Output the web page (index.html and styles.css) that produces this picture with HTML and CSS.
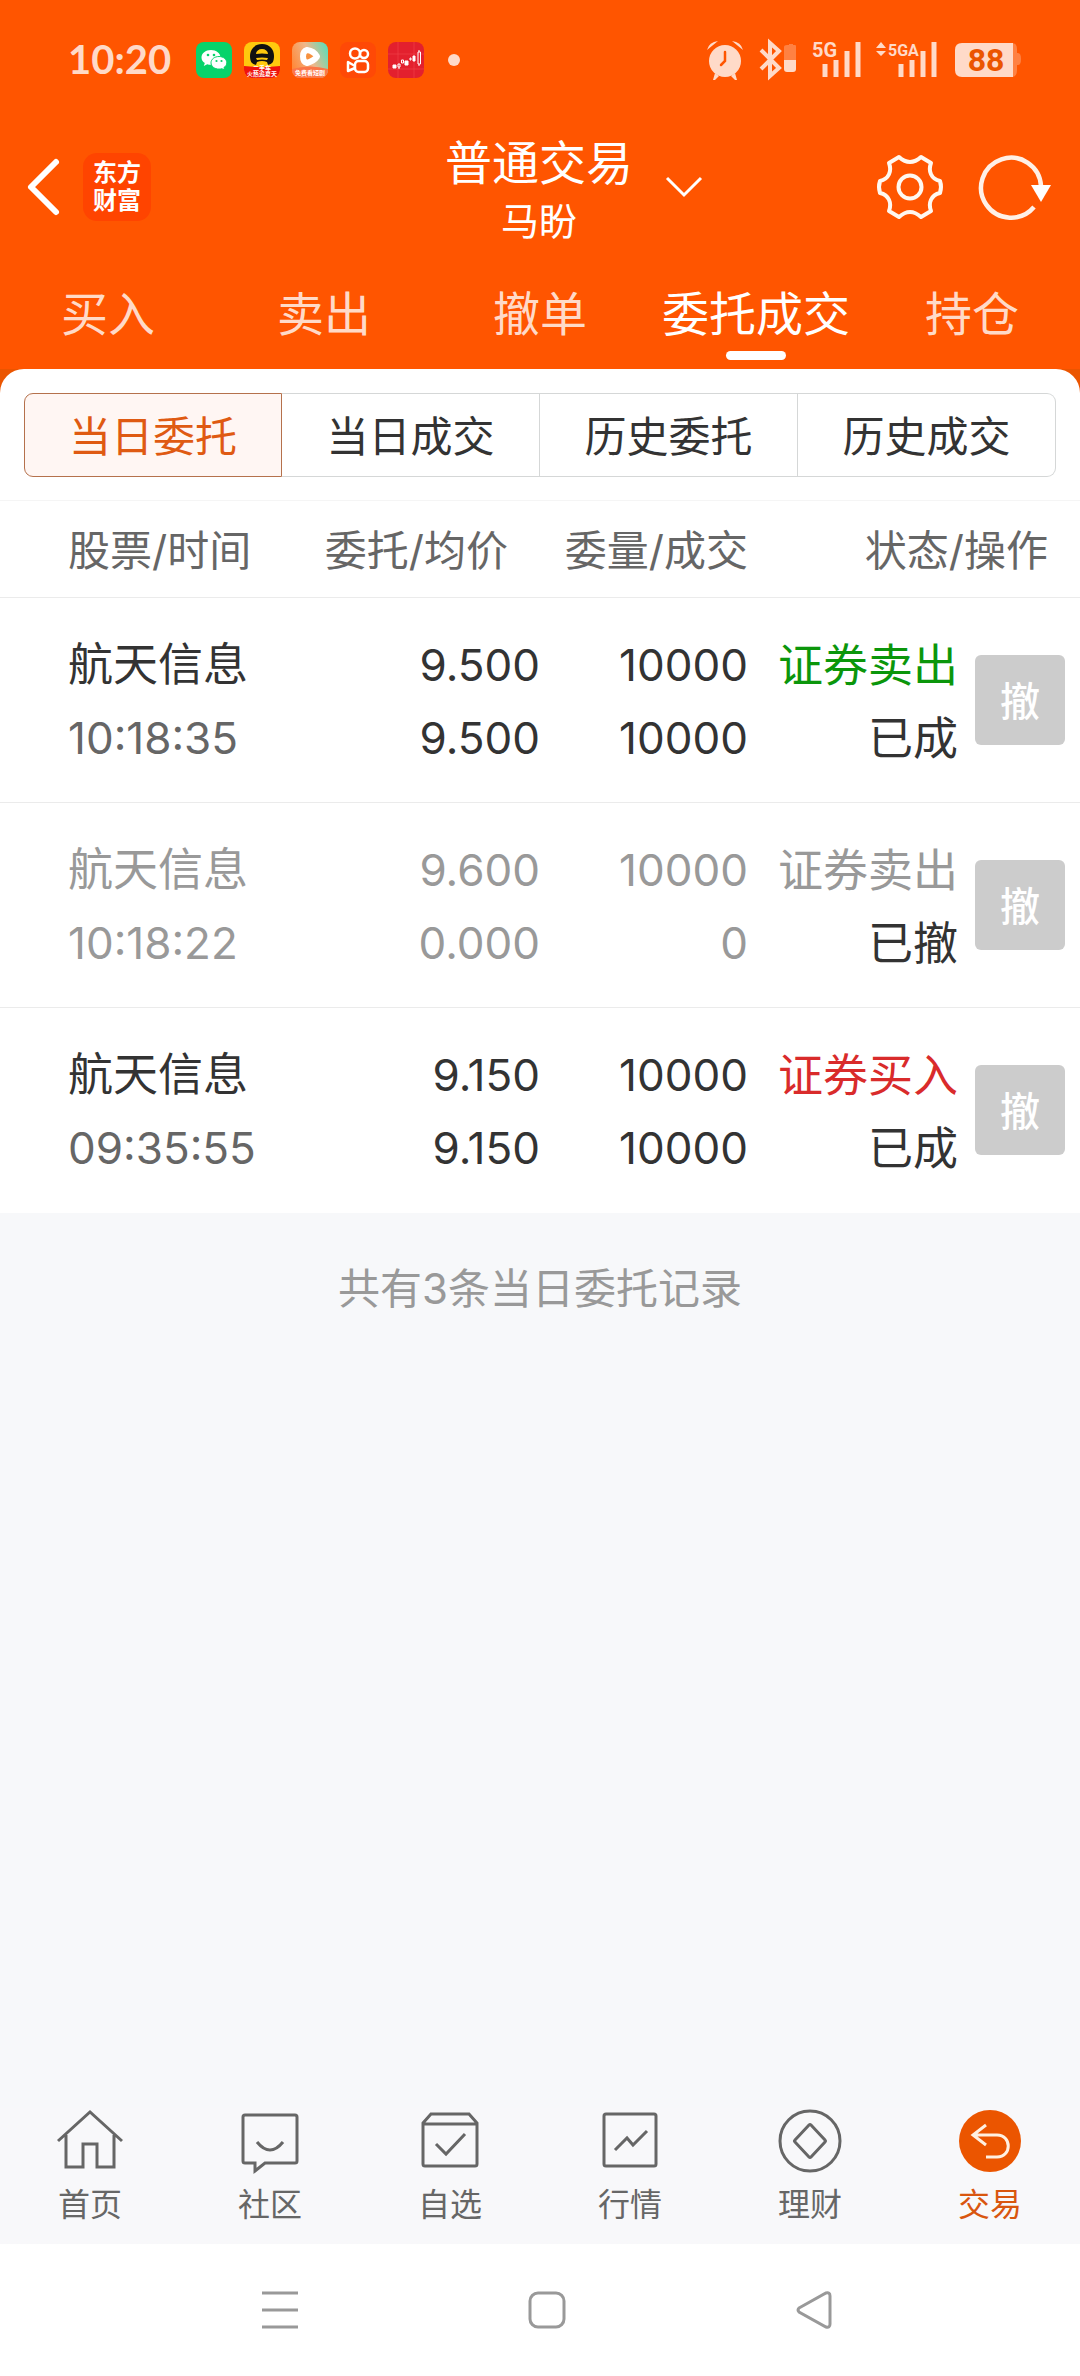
FILE: index.html
```html
<!DOCTYPE html>
<html lang="zh-CN">
<head>
    <meta charset="UTF-8">
    <meta name="viewport" content="width=device-width, initial-scale=1.0">
    <title>普通交易</title>
    <link rel="stylesheet" href="styles.css">
</head>
<body>
<header class="header">
    <!-- 状态栏 -->
    <div class="statusbar">
        <span class="clock">10:20</span>
        <div class="notices">
            <svg width="36" height="36" viewBox="0 0 36 36">
                <rect width="36" height="36" rx="8" fill="#07d36b"/>
                <path d="M15 8c-5.500 0-9.500 3.300-9.500 7.400 0 2.300 1.300 4.300 3.300 5.600l-1 3 3.400-1.700c1.200.4 2.500.5 3.800.5 5.300 0 9.500-3.300 9.500-7.400S20.300 8 15 8z" fill="#fff"/>
                <path d="M23 14.500c-4.500 0-8 2.800-8 6.300s3.500 6.300 8 6.300c1 0 2-.2 2.900-.4l2.800 1.400-.8-2.500c1.800-1.200 2.900-2.900 2.900-4.800 0-3.500-3.400-6.300-7.800-6.300z" fill="#fff" stroke="#07d36b"/>
                <g fill="#07d36b"><circle cx="12" cy="13" r="1.300"/><circle cx="18" cy="13" r="1.300"/><circle cx="20.500" cy="19" r="1.100"/><circle cx="25.500" cy="19" r="1.100"/></g>
            </svg>
            <svg width="36" height="36" viewBox="0 0 36 36">
                <rect width="36" height="36" rx="8" fill="#ffc90e"/>
                <path d="M0 24q18 2 36 0v4a8 8 0 0 1-8 8H8a8 8 0 0 1-8-8z" fill="#f0130d"/>
                <path d="M18 2C10 2 6 8 6 14s2 8 6 9l1-3q5-2 10 0l1 3c4-1 6-3 6-9S26 2 18 2z" fill="#111"/>
                <path d="M12 12a6 5 0 0 1 12 0q-6-1-12 0zM12 16q6-1 12 0l-1 2q-5-1-10 0z" fill="#ffc90e"/>
                <text x="18" y="28" class="tiny">二手车</text>
                <text x="18" y="34" class="tiny">火热追夏天</text>
            </svg>
            <svg width="36" height="36" viewBox="0 0 36 36">
                <defs><linearGradient id="play" x1="0" y1=".6" x2="1" y2=".2"><stop offset="0" stop-color="#ff8a3c"/><stop offset=".5" stop-color="#efb78a"/><stop offset="1" stop-color="#5fdcb8"/></linearGradient></defs>
                <rect width="36" height="36" rx="8" fill="url(#play)"/>
                <path d="M0 27q18-5 36 0v1a8 8 0 0 1-8 8H8a8 8 0 0 1-8-8z" fill="#fb7648"/>
                <path d="M15 8q-4 1-4 6.500T15 21q7-2 10-6.500Q22 9 15 8z" fill="#f7913f" stroke="#fff" stroke-width="6" stroke-linejoin="round"/>
                <text x="18" y="33" class="tiny">免费看短剧</text>
            </svg>
            <svg width="36" height="36" viewBox="0 0 36 36">
                <rect width="36" height="36" rx="8" fill="#ff4906"/>
                <g fill="none" stroke="#fff" stroke-width="2.500" stroke-linejoin="round"><circle cx="15" cy="11.500" r="5"/><circle cx="24" cy="12" r="4"/><rect x="15" y="19" width="13" height="11" rx="3.500"/><path d="M15 24l-7-4v9l7-3"/></g>
            </svg>
            <svg width="36" height="36" viewBox="0 0 36 36">
                <rect width="36" height="36" rx="8" fill="#e3202e"/>
                <path d="M10 0v36M26 0v36M0 12h36M0 27h36" stroke="#f04a50" stroke-width=".5"/>
                <g fill="#fff" stroke="#fff"><path d="M5 23h3v3H5zM17 19h3v4h-3zM25 14h2v5h-2z"/><path d="M10 22h2v3h-2zM13.500 18h2v3h-2zM22 16h1v2h-1zM30 10h2.500v12H30zM31 8v2M31 22v2M11 25v2" fill="none"/></g>
            </svg>
        </div>
        <i class="dot"></i>
        <div class="signals">
            <svg width="38" height="40" viewBox="0 0 38 40">
                <g fill="#ffdac8"><circle cx="19" cy="21" r="16"/><path d="M1 10q2-8 11-9zM37 10q-2-8-11-9zM9 33l4 3-4 4h-2zM29 33l-4 3 4 4h2z"/></g>
                <path d="M19 12v9l-4 4" fill="none" stroke="#ff5500" stroke-width="2.500" stroke-linecap="round"/>
            </svg>
            <svg width="40" height="40" viewBox="0 0 40 40">
                <path d="M3 10l18 18-9 8V3l9 8L3 29" fill="none" stroke="#ffdac8" stroke-width="4"/>
                <path d="M29 5h2V4h4v1h2q1 0 1 1v14H26V7q0-2 3-2z" fill="#ff8142"/>
                <path d="M26 20h12v9q0 3-3 3h-6q-3 0-3-3z" fill="#ffdac8"/>
            </svg>
            <svg width="50" height="40" viewBox="0 0 50 40">
                <text x="0" y="17" class="net">5G</text>
                <path d="M13 24v13M24 20v17M35 11v26M46 2v35" stroke="#ffdac8" stroke-width="5"/>
            </svg>
            <svg width="64" height="40" viewBox="0 0 64 40">
                <path d="M0 8l5-6 5 6zM0 11l5 5 5-5z" fill="#ffdac8"/>
                <text x="12" y="16" class="net narrow">5GA</text>
                <path d="M25 24v13M36 20v17M47 11v26M58 2v35" stroke="#ffdac8" stroke-width="5"/>
            </svg>
            <svg width="68" height="36" viewBox="0 0 68 36">
                <path d="M56 1h2q5 0 5 6v4h1q3 0 3 6t-3 6h-1v5q0 7-5 7h-2z" fill="#ff8142"/>
                <path d="M8 1h51v34H8q-7 0-7-7V8q0-7 7-7z" fill="#ffdac8"/>
                <text x="32" y="29" class="battery">88</text>
            </svg>
        </div>
    </div>

    <!-- 标题栏 -->
    <div class="titlebar">
        <div class="side">
            <button class="icon-btn" aria-label="返回">
                <svg width="34" height="60" viewBox="0 0 34 60"><path d="M30 5L5 30l25 25" fill="none" stroke="#fff" stroke-width="6" stroke-linecap="round" stroke-linejoin="round"/></svg>
            </button>
            <a class="logo" href="#">东方<br>财富</a>
        </div>
        <div class="title">
            <h1>普通交易</h1>
            <p>马盼</p>
        </div>
        <div class="side">
            <button class="icon-btn switch" aria-label="切换账户">
                <svg width="38" height="22" viewBox="0 0 38 22"><path d="M2 2l17 17L36 2" fill="none" stroke="#fff" stroke-width="3"/></svg>
            </button>
            <button class="icon-btn setting" aria-label="设置">
                <svg width="66" height="64" viewBox="0 0 66 64" fill="none" stroke="#fff8f0" stroke-width="4" stroke-linejoin="round"><path d="M22 2Q33 12 44 2L54 8C51 16 54 24 63 26Q65 32 63 38C54 40 51 48 54 56L44 62Q33 52 22 62L12 56C15 48 12 40 3 38Q1 32 3 26C12 24 15 16 12 8Z"/><circle cx="33" cy="32" r="11.500"/></svg>
            </button>
            <button class="icon-btn" aria-label="刷新">
                <svg width="74" height="66" viewBox="0 0 74 66"><path d="M56 53A30 30 0 1 1 63 32" fill="none" stroke="#fff0e6" stroke-width="4.500"/><path d="M53 31h20L63 48z" fill="#fff"/></svg>
            </button>
        </div>
    </div>

    <nav class="tabs">
        <a href="#">买入</a>
        <a href="#">卖出</a>
        <a href="#">撤单</a>
        <a href="#" class="active">委托成交</a>
        <a href="#">持仓</a>
    </nav>
</header>

<main>
    <div class="panel-wrap">
        <div class="panel">
            <div class="segments">
                <button class="active">当日委托</button>
                <button>当日成交</button>
                <button>历史委托</button>
                <button>历史成交</button>
            </div>
        </div>
    </div>

    <table class="orders">
        <colgroup>
            <col>
            <col class="col-price">
            <col class="col-amount">
            <col class="col-state">
            <col class="col-action">
        </colgroup>
        <thead>
        <tr>
            <th class="name">股票/时间</th>
            <th class="price">委托/均价</th>
            <th>委量/成交</th>
            <th class="state" colspan="2">状态/操作</th>
        </tr>
        </thead>
        <tbody>
        <tr>
            <td class="name">航天信息<br><span class="time">10:18:35</span></td>
            <td class="num">9.500<br>9.500</td>
            <td class="num">10000<br>10000</td>
            <td><span class="sell">证券卖出</span><br>已成</td>
            <td class="action"><button class="cancel">撤</button></td>
        </tr>
        <tr class="revoked">
            <td class="name">航天信息<br><span class="time">10:18:22</span></td>
            <td class="num">9.600<br>0.000</td>
            <td class="num">10000<br>0</td>
            <td>证券卖出<br><span class="done">已撤</span></td>
            <td class="action"><button class="cancel">撤</button></td>
        </tr>
        <tr>
            <td class="name">航天信息<br><span class="time">09:35:55</span></td>
            <td class="num">9.150<br>9.150</td>
            <td class="num">10000<br>10000</td>
            <td><span class="buy">证券买入</span><br>已成</td>
            <td class="action"><button class="cancel">撤</button></td>
        </tr>
        </tbody>
    </table>
    <p class="summary">共有3条当日委托记录</p>
</main>

<!-- 底部导航 -->
<nav class="bottom-nav">
    <a href="#">
        <svg viewBox="0 0 66 66"><path d="M1 33L33 4l32 29M9 27v32h17V36h14v23h17V27"/></svg>
        <span>首页</span>
    </a>
    <a href="#">
        <svg viewBox="0 0 66 66"><path d="M8 7h50q2 0 2 2v44q0 2-2 2H28l-10 8v-8H8q-2 0-2-2V9q0-2 2-2zM20 34q13 16 26 0"/></svg>
        <span>社区</span>
    </a>
    <a href="#">
        <svg viewBox="0 0 66 66"><path d="M6 15l8-9h38l8 9v41q0 2-2 2H8q-2 0-2-2zM6 16h54M19 36l10 10 19-20"/></svg>
        <span>自选</span>
    </a>
    <a href="#">
        <svg viewBox="0 0 66 66"><path d="M9 6h48q2 0 2 2v48q0 2-2 2H9q-2 0-2-2V8q0-2 2-2zM18 42l12-12 6 7 14-14"/></svg>
        <span>行情</span>
    </a>
    <a href="#">
        <svg viewBox="0 0 66 66"><circle cx="33" cy="33" r="30"/><path d="M32 17q1-1 2 0l14 15q1 1 0 2L34 49q-1 1-2 0L18 34q-1-1 0-2z"/></svg>
        <span>理财</span>
    </a>
    <a href="#" class="active">
        <svg viewBox="0 0 66 66"><circle cx="33" cy="33" r="31" fill="#eb5500" stroke="none"/><path d="M29 17L16 27l13 10M16 27h24c15 0 15 22 0 22H29" stroke="#fff0e0"/></svg>
        <span>交易</span>
    </a>
</nav>

<div class="system-bar">
    <button class="icon-btn" aria-label="最近任务"><svg width="36" height="38" viewBox="0 0 36 38"><path d="M0 2h36M0 19h36M0 36h36"/></svg></button>
    <button class="icon-btn" aria-label="主屏幕"><svg width="38" height="38" viewBox="0 0 38 38"><rect x="2" y="2" width="34" height="34" rx="8"/></svg></button>
    <button class="icon-btn" aria-label="后退"><svg width="36" height="38" viewBox="0 0 36 38"><path d="M3 17L30 2q4-1 4 3v28q0 4-4 3L3 21q-2-2 0-4z"/></svg></button>
</div>
</body>
</html>
```
FILE: styles.css
```css
:root {
    --brand: #ff5500;
    --brand-deep: #eb5500;
    --status-color: #ffdac8;
    --text-color: #333;
    --text-gray: #666;
    --text-light: #999;
    --page-bg: #f7f8fa;
}
* {
    box-sizing: border-box;
}
body {
    margin: 0;
    min-height: 100vh;
    display: flex;
    flex-direction: column;
    font-family: Inter, "Noto Sans CJK SC", sans-serif;
    color: var(--text-color);
    background-color: var(--page-bg);
}
h1, p {
    margin: 0;
    font-weight: 400;
}
a {
    color: inherit;
    text-decoration: none;
}
button {
    font-family: inherit;
    color: inherit;
    margin: 0;
    padding: 0;
    cursor: pointer;
}
svg {
    display: block;
    overflow: visible;
}
.icon-btn {
    border: none;
    background: none;
}
.header {
    background-color: var(--brand);
    color: #fff;
}

/* 状态栏 */
.statusbar {
    display: flex;
    align-items: center;
    height: 120px;
    padding: 0 58px 0 68px;
    color: var(--status-color);
}
.clock {
    width: 128px;
    padding-bottom: 3px;
    font-family: Lato, sans-serif;
    font-size: 40px;
    font-weight: 700;
    line-height: 60px;
}
.notices {
    display: flex;
    gap: 12px;
}
.dot {
    width: 12px;
    height: 12px;
    margin-left: 24px;
    border-radius: 50%;
    background-color: var(--status-color);
}
.signals {
    display: flex;
    align-items: center;
    gap: 14px;
    margin-left: auto;
}
.tiny {
    font-size: 6px;
    font-weight: 700;
    fill: #fff;
    text-anchor: middle;
}
.net {
    font-family: Roboto, sans-serif;
    font-size: 20px;
    font-weight: 700;
    fill: var(--status-color);
}
.net.narrow {
    font-size: 16px;
}
.battery {
    font-family: Roboto, sans-serif;
    font-size: 32px;
    font-weight: 700;
    fill: var(--brand-deep);
    text-anchor: middle;
}

/* 标题栏 */
.titlebar {
    display: grid;
    grid-template-columns: 1fr auto 1fr;
    align-items: center;
    height: 134px;
    padding: 0 28px 0 26px;
}
.side {
    display: flex;
    align-items: center;
}
.logo {
    width: 68px;
    height: 68px;
    margin-left: 23px;
    padding-top: 6px;
    border-radius: 14px;
    background-color: #ff4400;
    font-size: 24px;
    font-weight: 700;
    line-height: 28px;
    text-align: center;
}
.title {
    padding-top: 8px;
    text-align: center;
}
.title h1 {
    font-size: 47px;
    line-height: 60px;
}
.title p {
    font-size: 38px;
    line-height: 56px;
}
.switch {
    margin-left: 32px;
}
.setting {
    margin: 0 35px 0 auto;
}
.tabs {
    display: grid;
    grid-template-columns: repeat(5, 1fr);
    height: 115px;
}
.tabs a {
    display: flex;
    flex-direction: column;
    align-items: center;
    padding-top: 28px;
    font-size: 47px;
    line-height: 64px;
    color: var(--status-color);
}
.tabs .active {
    color: #fff;
}
.tabs .active::after {
    content: "";
    width: 60px;
    height: 9px;
    margin-top: 5px;
    border-radius: 5px;
    background-color: #fff;
}

/* 委托列表 */
main {
    flex: 1;
}
.panel-wrap {
    background-color: var(--brand-deep);
}
.panel {
    padding: 24px 24px 23px;
    border-bottom: 1px solid #f5f5f5;
    border-radius: 24px 24px 0 0;
    background-color: #fff;
}
.segments {
    display: grid;
    grid-template-columns: repeat(4, 1fr);
    height: 84px;
}
.segments button {
    padding-bottom: 3px;
    border: 1px solid #d5d7d7;
    border-left-width: 0;
    background-color: #fff;
    font-size: 42px;
}
.segments button:last-child {
    border-radius: 0 9px 9px 0;
}
.segments .active {
    border: 1px solid #b5714c;
    border-radius: 9px 0 0 9px;
    background-color: #fff6f3;
    color: #df5a12;
}
.orders {
    width: 100%;
    table-layout: fixed;
    border-spacing: 0;
    background-color: #fff;
    text-align: right;
}
.col-price {
    width: 240px;
}
.col-amount {
    width: 208px;
}
.col-state {
    width: 210px;
}
.col-action {
    width: 122px;
}
.orders th {
    padding: 4px 0 0;
    border-bottom: 1px solid #ebebeb;
    font-size: 42px;
    font-weight: 400;
    line-height: 92px;
    color: var(--text-gray);
    white-space: nowrap;
}
.orders td {
    padding: 30px 0 27px;
    border-bottom: 1px solid #ebebeb;
    font-size: 45px;
    line-height: 73px;
    vertical-align: middle;
}
.orders tr:last-child td {
    border-bottom-color: #fff;
}
.orders .num {
    font-size: 44px;
}
.orders .name {
    padding-left: 68px;
    text-align: left;
}
.orders .price {
    padding-right: 32px;
}
.orders .state {
    padding-right: 32px;
}
.orders .action {
    padding: 0 0 0 17px;
    text-align: left;
}
.time {
    font-size: 44px;
    color: var(--text-gray);
}
.sell {
    color: #0b960b;
}
.buy {
    color: #d92b2b;
}
.revoked, .revoked .time {
    color: var(--text-light);
}
.done {
    color: var(--text-color);
}
.cancel {
    display: block;
    width: 90px;
    height: 90px;
    padding-bottom: 3px;
    border: none;
    border-radius: 6px;
    background-color: #ccc;
    color: #fff;
    font-size: 40px;
    font-weight: 500;
}
.summary {
    padding: 46px 0;
    font-size: 42px;
    line-height: 60px;
    color: var(--text-light);
    text-align: center;
}

/* 底部导航 */
.bottom-nav {
    display: grid;
    grid-template-columns: repeat(6, 1fr);
    padding-bottom: 17px;
    background-color: #f8f8fa;
    color: var(--text-gray);
}
.bottom-nav a {
    display: flex;
    flex-direction: column;
    align-items: center;
    gap: 9px;
    font-size: 32px;
    line-height: 44px;
}
.bottom-nav svg {
    width: 66px;
    height: 66px;
    fill: none;
    stroke: currentColor;
    stroke-width: 3;
}
.bottom-nav .active {
    color: #d9560f;
}
.system-bar {
    display: flex;
    justify-content: space-between;
    align-items: center;
    height: 132px;
    padding: 0 248px 0 262px;
    background-color: #fff;
}
.system-bar svg {
    fill: none;
    stroke: #999;
    stroke-width: 3;
}
```
